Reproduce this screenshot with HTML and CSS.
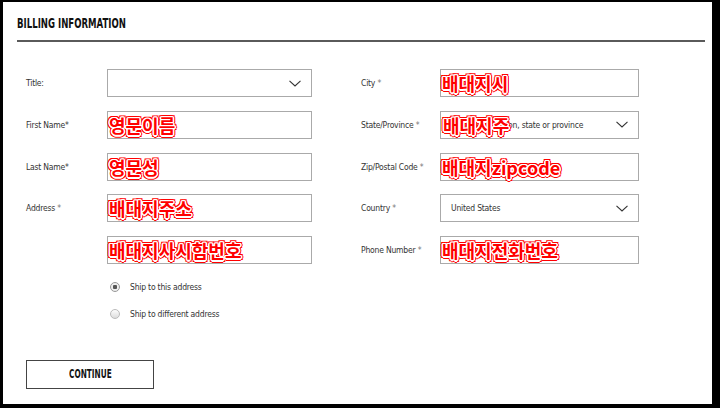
FILE: index.html
```html
<!DOCTYPE html>
<html lang="en">
<head>
  <meta charset="UTF-8">
  <title>Billing Information</title>
  <link rel="stylesheet" href="styles.css">
</head>
<body>
  <div class="page">
    <div class="header">
      <h1 class="title"><span class="squeeze">BILLING INFORMATION</span></h1>
    </div>

    <div class="form">
      <div class="columns">
        <div class="col col-left">
          <div class="row">
            <label>Title:</label>
            <div class="field select">
              <span class="value"></span>
              <svg class="chevron" width="12" height="7" viewBox="0 0 12 7"><polyline points="0.5,0.8 6,6 11.5,0.8" /></svg>
            </div>
          </div>
          <div class="row">
            <label>First Name*</label>
            <div class="field"><span class="note">영문이름</span></div>
          </div>
          <div class="row">
            <label>Last Name*</label>
            <div class="field"><span class="note">영문성</span></div>
          </div>
          <div class="row">
            <label>Address <span class="req">*</span></label>
            <div class="field"><span class="note">배대지주소</span></div>
          </div>
          <div class="row">
            <label></label>
            <div class="field"><span class="note">배대지사시함번호</span></div>
          </div>

          <div class="radios">
            <div class="radio-row">
              <span class="radio checked"></span>
              <span>Ship to this address</span>
            </div>
            <div class="radio-row">
              <span class="radio"></span>
              <span>Ship to different address</span>
            </div>
          </div>
        </div>

        <div class="col col-right">
          <div class="row">
            <label>City <span class="req">*</span></label>
            <div class="field"><span class="note">배대지시</span></div>
          </div>
          <div class="row">
            <label>State/Province <span class="req">*</span></label>
            <div class="field select">
              <span class="value">Select your region, state or province</span>
              <span class="note note-over">배대지주</span>
              <svg class="chevron" width="12" height="7" viewBox="0 0 12 7"><polyline points="0.5,0.8 6,6 11.5,0.8" /></svg>
            </div>
          </div>
          <div class="row">
            <label>Zip/Postal Code <span class="req">*</span></label>
            <div class="field"><span class="note">배대지zipcode</span></div>
          </div>
          <div class="row">
            <label>Country <span class="req">*</span></label>
            <div class="field select">
              <span class="value">United States</span>
              <svg class="chevron" width="12" height="7" viewBox="0 0 12 7"><polyline points="0.5,0.8 6,6 11.5,0.8" /></svg>
            </div>
          </div>
          <div class="row">
            <label>Phone Number <span class="req">*</span></label>
            <div class="field"><span class="note">배대지전화번호</span></div>
          </div>
        </div>
      </div>

      <button class="continue"><span class="squeeze">CONTINUE</span></button>
    </div>
  </div>
</body>
</html>
```

FILE: styles.css
```css
html, body {
  margin: 0;
  background: #000;
}

body {
  font-family: "Liberation Sans Narrow", "DejaVu Sans Condensed", "Liberation Sans", sans-serif;
  color: #333;
}

.page {
  margin: 2px 8px 0 3px;
  height: 402px;
  background: #fff;
  overflow: hidden;
}

.header {
  padding: 13px 7px 0 14px;
}

.title {
  margin: 0;
  padding-bottom: 9px;
  border-bottom: 2px solid #5a5a5a;
  font-size: 14px;
  line-height: 16px;
  font-weight: bold;
  color: #111;
}

/* the original uses a condensed display face */
.squeeze {
  display: inline-block;
  transform: scaleX(0.68);
  transform-origin: left center;
  white-space: nowrap;
}

.form {
  padding: 27px 0 0 23px;
}

.columns {
  display: flex;
  gap: 49px;
}

.col {
  display: flex;
  flex-direction: column;
  gap: 13.75px;
}

.row {
  display: flex;
  align-items: center;
  height: 28px;
}

.col-left label {
  width: 81px;
}

.col-right label {
  width: 79px;
}

label {
  font-size: 8.5px;
  letter-spacing: -0.2px;
  color: #333;
  flex-shrink: 0;
}

.req {
  color: #777;
}

.field {
  position: relative;
  box-sizing: border-box;
  height: 28px;
  border: 1px solid #aaa;
  display: flex;
  align-items: center;
  padding-left: 1px;
}

.col-left .field {
  width: 205px;
}

.col-right .field {
  width: 199px;
}

.select {
  padding-left: 10px;
  padding-right: 10px;
}

.select .value {
  flex: 1;
  font-size: 8.5px;
  letter-spacing: -0.2px;
  color: #333;
  white-space: nowrap;
}

.chevron {
  fill: none;
  stroke: #333;
  stroke-width: 1.1;
}

.note {
  font-family: "Noto Sans CJK KR", "Noto Sans", sans-serif;
  font-size: 18px;
  font-weight: bold;
  line-height: 22px;
  color: #f00;
  text-shadow:
    1px 1px 0 #fff, -1px -1px 0 #fff, 1px -1px 0 #fff, -1px 1px 0 #fff,
    1.5px 0 0 #fff, -1.5px 0 0 #fff, 0 1.5px 0 #fff, 0 -1.5px 0 #fff,
    2.5px 0 0 #f00, -2.5px 0 0 #f00, 0 2.5px 0 #f00, 0 -2.5px 0 #f00,
    2px 2px 0 #f00, -2px -2px 0 #f00, 2px -2px 0 #f00, -2px 2px 0 #f00;
}

.note-over {
  position: absolute;
  left: 2px;
  top: 2px;
}

.radios {
  margin-top: 2px;
  padding-left: 84px;
  display: flex;
  flex-direction: column;
  gap: 13px;
}

.radio-row {
  display: flex;
  align-items: center;
  gap: 10px;
  height: 14px;
  font-size: 8.5px;
  letter-spacing: -0.2px;
  color: #333;
}

.radio {
  box-sizing: border-box;
  width: 10px;
  height: 10px;
  border-radius: 50%;
  border: 1px solid #bbb;
  background: linear-gradient(#fdfdfd, #dcdcdc);
}

.radio.checked {
  border-color: #999;
  background: radial-gradient(circle, #555 0, #555 2px, #eee 2.5px);
}

.continue {
  display: block;
  margin-top: 39px;
  width: 128px;
  height: 29px;
  padding: 0;
  background: #fff;
  border: 1.5px solid #444;
  font-family: inherit;
  font-size: 12px;
  font-weight: bold;
  color: #111;
  text-align: center;
}

.continue .squeeze {
  transform-origin: center;
}
```
